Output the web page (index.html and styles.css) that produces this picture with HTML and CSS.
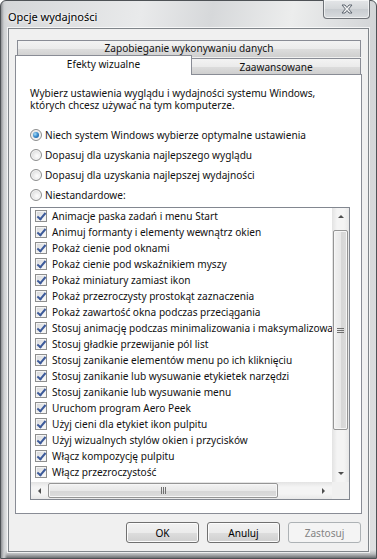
FILE: index.html
```html
<!DOCTYPE html>
<html lang="pl">
<head>
  <meta charset="UTF-8" />
  <meta name="viewport" content="width=device-width, initial-scale=1.0"/>
  <title>Opcje wydajności</title>
  <link rel="stylesheet" href="styles.css">
</head>
<body>

  <div class="window">
    <!-- Title bar -->
    <div class="title-bar">
      <span class="title">Opcje wydajności</span>
      <div class="close-btn">
        <svg width="14" height="10" viewBox="0 0 14 10">
          <path d="M2 1 L5 1 L7 3.5 L9 1 L12 1 L8.6 5 L12 9 L9 9 L7 6.5 L5 9 L2 9 L5.4 5 Z" fill="#f4f4f4" stroke="#5e6670" stroke-width="1" stroke-linejoin="round"/>
        </svg>
      </div>
    </div>

    <div class="client">
      <!-- Tabs -->
      <div class="tabs">
        <div class="tab-row back">
          <div class="tab wide">Zapobieganie wykonywaniu danych</div>
        </div>
        <div class="tab-row front">
          <div class="tab selected">Efekty wizualne</div>
          <div class="tab other">Zaawansowane</div>
        </div>
      </div>

      <div class="panel">
        <p class="intro">Wybierz ustawienia wyglądu i wydajności systemu Windows,<br>których chcesz używać na tym komputerze.</p>

        <div class="options">
          <div class="radio-row"><span class="radio checked"></span>Niech system Windows wybierze optymalne ustawienia</div>
          <div class="radio-row"><span class="radio"></span>Dopasuj dla uzyskania najlepszego wyglądu</div>
          <div class="radio-row"><span class="radio"></span>Dopasuj dla uzyskania najlepszej wydajności</div>
          <div class="radio-row"><span class="radio"></span>Niestandardowe:</div>
        </div>

        <div class="listbox">
          <div class="list-main">
            <ul class="items">
              <li><span class="check"></span>Animacje paska zadań i menu Start</li>
              <li><span class="check"></span>Animuj formanty i elementy wewnątrz okien</li>
              <li><span class="check"></span>Pokaż cienie pod oknami</li>
              <li><span class="check"></span>Pokaż cienie pod wskaźnikiem myszy</li>
              <li><span class="check"></span>Pokaż miniatury zamiast ikon</li>
              <li><span class="check"></span>Pokaż przezroczysty prostokąt zaznaczenia</li>
              <li><span class="check"></span>Pokaż zawartość okna podczas przeciągania</li>
              <li><span class="check"></span>Stosuj animację podczas minimalizowania i maksymalizowania</li>
              <li><span class="check"></span>Stosuj gładkie przewijanie pól list</li>
              <li><span class="check"></span>Stosuj zanikanie elementów menu po ich kliknięciu</li>
              <li><span class="check"></span>Stosuj zanikanie lub wysuwanie etykietek narzędzi</li>
              <li><span class="check"></span>Stosuj zanikanie lub wysuwanie menu</li>
              <li><span class="check"></span>Uruchom program Aero Peek</li>
              <li><span class="check"></span>Użyj cieni dla etykiet ikon pulpitu</li>
              <li><span class="check"></span>Użyj wizualnych stylów okien i przycisków</li>
              <li><span class="check"></span>Włącz kompozycję pulpitu</li>
              <li><span class="check"></span>Włącz przezroczystość</li>
            </ul>
            <div class="vscroll">
              <span class="arrow up"></span>
              <div class="track">
                <div class="thumb v"><span class="grip-h"></span></div>
              </div>
              <span class="arrow down"></span>
            </div>
          </div>
          <div class="hscroll-row">
            <div class="hscroll">
              <span class="arrow left"></span>
              <div class="track">
                <div class="thumb h"><span class="grip-v"></span></div>
              </div>
              <span class="arrow right"></span>
            </div>
            <div class="corner"></div>
          </div>
        </div>
      </div>

      <div class="buttons">
        <button class="btn">OK</button>
        <button class="btn">Anuluj</button>
        <button class="btn" disabled>Zastosuj</button>
      </div>
    </div>
  </div>

</body>
</html>
```

FILE: styles.css
```css
* {
  box-sizing: border-box;
}

body {
  margin: 0;
  padding: 0;
  font-family: 'Noto Sans', 'Open Sans', sans-serif;
  font-size: 10.1px;
  color: #111;
  background: #fff;
}

/* Window frame */
.window {
  width: 377px;
  height: 559px;
  padding: 0 7px 8px 7px;
  border: 1px solid #4e5256;
  border-radius: 6px 6px 0 0;
  background:
    linear-gradient(to right, #8e9094 0px, #cfd1d3 3px, transparent 6px),
    linear-gradient(to top, #6c6e71 0px, #b9bbbd 4px, transparent 8px),
    linear-gradient(100deg, #d4d6d8 0%, #e9eaeb 30%, #d6d8da 45%, #eceded 62%, #d3d5d7 80%, #dfe0e1 100%);
}

.title-bar {
  height: 27px;
  display: flex;
  justify-content: space-between;
  align-items: flex-start;
}

.title {
  padding: 10px 0 0 0;
  line-height: 12px;
  font-size: 11px;
  color: #000;
  text-shadow: 0 0 6px #fff, 0 0 3px #fff;
}

.close-btn {
  width: 47px;
  height: 19px;
  margin-top: -1px;
  margin-right: -1px;
  border: 1px solid #6f7378;
  border-top: none;
  border-radius: 0 0 4px 4px;
  background: linear-gradient(#e4e6e8, #d4d7da 50%, #c8ccd0 51%, #d8dbde);
  box-shadow: inset 0 0 0 1px rgba(255,255,255,0.6);
  display: flex;
  justify-content: center;
  align-items: center;
}

/* Client area */
.client {
  height: 524px;
  background: #f0f0f0;
  border: 1px solid #80858a;
  box-shadow: 0 0 0 1px rgba(255,255,255,0.7);
  padding: 11px 6px 0 6px;
}

/* Tabs */
.tab-row {
  display: flex;
}

.tab-row.back {
  padding: 0 1px 0 2px;
}

.tab-row.front {
  height: 20px;
  margin-top: -2px;
  align-items: flex-end;
}

.tab {
  border: 1px solid #898c95;
  border-bottom: none;
  background: linear-gradient(#f3f3f3, #ebebeb 50%, #dddddd 50%, #cfcfcf);
  text-align: center;
  white-space: nowrap;
}

.tab.wide {
  width: 346px;
  height: 17px;
  line-height: 15px;
}

.tab.selected {
  position: relative;
  z-index: 2;
  width: 177px;
  height: 20px;
  line-height: 16px;
  background: #fff;
}

.tab.other {
  width: 170px;
  height: 16px;
  margin-left: -1px;
  margin-bottom: 1px;
  line-height: 16px;
}

.panel {
  position: relative;
  z-index: 1;
  height: 440px;
  margin-top: -1px;
  background: #fff;
  border: 1px solid #898c95;
  padding: 12px 13px 0 14px;
}

.intro {
  margin: 0;
  line-height: 12px;
}

.options {
  margin-top: 14px;
}

.radio-row {
  height: 20px;
  display: flex;
  align-items: center;
  white-space: nowrap;
}

.radio {
  width: 12px;
  height: 12px;
  margin-right: 3px;
  border: 1px solid #8e8f8f;
  border-radius: 50%;
  background: radial-gradient(circle at 60% 60%, #fefefe 0%, #e9e9e9 45%, #c9cbcd 100%);
  box-shadow: inset 0 0 0 1px #f6f6f6;
  display: flex;
  justify-content: center;
  align-items: center;
}

.radio.checked::after {
  content: '';
  width: 6px;
  height: 6px;
  border-radius: 50%;
  background: radial-gradient(circle at 35% 35%, #a9def7 0%, #3f8fcf 45%, #0d4f8f 100%);
}

/* Listbox */
.listbox {
  margin-top: 2px;
  width: 320px;
  height: 293px;
  border: 1px solid #828790;
  background: #fff;
  display: flex;
  flex-direction: column;
}

.list-main {
  display: flex;
  height: 274px;
}

.items {
  flex: 1;
  margin: 0;
  padding: 0;
  list-style: none;
  overflow: hidden;
}

.items li {
  height: 16px;
  display: flex;
  align-items: center;
  padding-left: 4px;
  white-space: nowrap;
}

.check {
  flex: none;
  position: relative;
  width: 12px;
  height: 12px;
  margin-right: 5px;
  border: 1px solid #8e8f8f;
  background: linear-gradient(135deg, #d3d5d8 0%, #eaebec 55%, #fdfdfd 100%);
  box-shadow: inset 0 0 0 1px #f4f4f4;
}

.check::after {
  content: '';
  position: absolute;
  left: 3px;
  top: 0px;
  width: 3px;
  height: 7px;
  border-right: 2px solid #3c5a9a;
  border-bottom: 2px solid #3c5a9a;
  transform: rotate(40deg);
}

/* Scrollbars */
.vscroll {
  width: 17px;
  display: flex;
  flex-direction: column;
  background: linear-gradient(to right, #e3e3e3, #f4f4f4 30%, #f4f4f4 70%, #e8e8e8);
}

.hscroll-row {
  display: flex;
  height: 17px;
}

.hscroll {
  flex: 1;
  display: flex;
  background: linear-gradient(#e3e3e3, #f4f4f4 30%, #f4f4f4 70%, #e8e8e8);
}

.corner {
  width: 17px;
  background: #f0f0f0;
}

.vscroll .track {
  flex: 1;
  padding: 2px 1px;
}

.hscroll .track {
  flex: 1;
  padding: 1px 2px;
}

.arrow {
  flex: none;
  width: 17px;
  height: 17px;
  display: flex;
  justify-content: center;
  align-items: center;
}

.arrow::after {
  content: '';
  width: 0;
  height: 0;
  border: 3px solid transparent;
}

.arrow.up::after {
  border-top: none;
  border-bottom: 3px solid #4e4e4e;
}

.arrow.down::after {
  border-bottom: none;
  border-top: 3px solid #4e4e4e;
}

.arrow.left::after {
  border-left: none;
  border-right: 3px solid #4e4e4e;
  border-top-width: 3.5px;
  border-bottom-width: 3.5px;
}

.arrow.right::after {
  border-right: none;
  border-left: 3px solid #4e4e4e;
  border-top-width: 3.5px;
  border-bottom-width: 3.5px;
}

.thumb {
  border: 1px solid #959595;
  border-radius: 2px;
  display: flex;
  justify-content: center;
  align-items: center;
  box-shadow: inset 0 0 0 1px #f6f6f6;
}

.thumb.v {
  height: 200px;
  margin-top: 3px;
  background: linear-gradient(to right, #f2f2f2, #e8e8e8 50%, #d6d6d6 51%, #dcdcdc);
}

.thumb.h {
  width: 230px;
  height: 100%;
  margin-left: -2px;
  background: linear-gradient(#f2f2f2, #e8e8e8 50%, #d6d6d6 51%, #dcdcdc);
}

.grip-h {
  width: 7px;
  height: 5px;
  border-top: 1px solid #707070;
  border-bottom: 1px solid #707070;
  background: linear-gradient(transparent 1px, #707070 1px, #707070 2px, transparent 2px);
}

.grip-v {
  width: 5px;
  height: 7px;
  border-left: 1px solid #707070;
  border-right: 1px solid #707070;
  background: linear-gradient(to right, transparent 1px, #707070 1px, #707070 2px, transparent 2px);
}

/* Buttons */
.buttons {
  display: flex;
  justify-content: flex-end;
  gap: 8px;
  margin-top: 8px;
  padding-right: 1px;
}

.btn {
  width: 73px;
  height: 21px;
  padding: 0;
  font-family: inherit;
  font-size: 10.1px;
  color: #000;
  border: 1px solid #707070;
  border-radius: 3px;
  background: linear-gradient(#f2f2f2, #ebebeb 50%, #dddddd 51%, #cfcfcf);
  box-shadow: inset 0 0 0 1px #fcfcfc;
}

.btn:disabled {
  color: #838383;
  border-color: #adb2b5;
  background: #f4f4f4;
  box-shadow: none;
}
```
